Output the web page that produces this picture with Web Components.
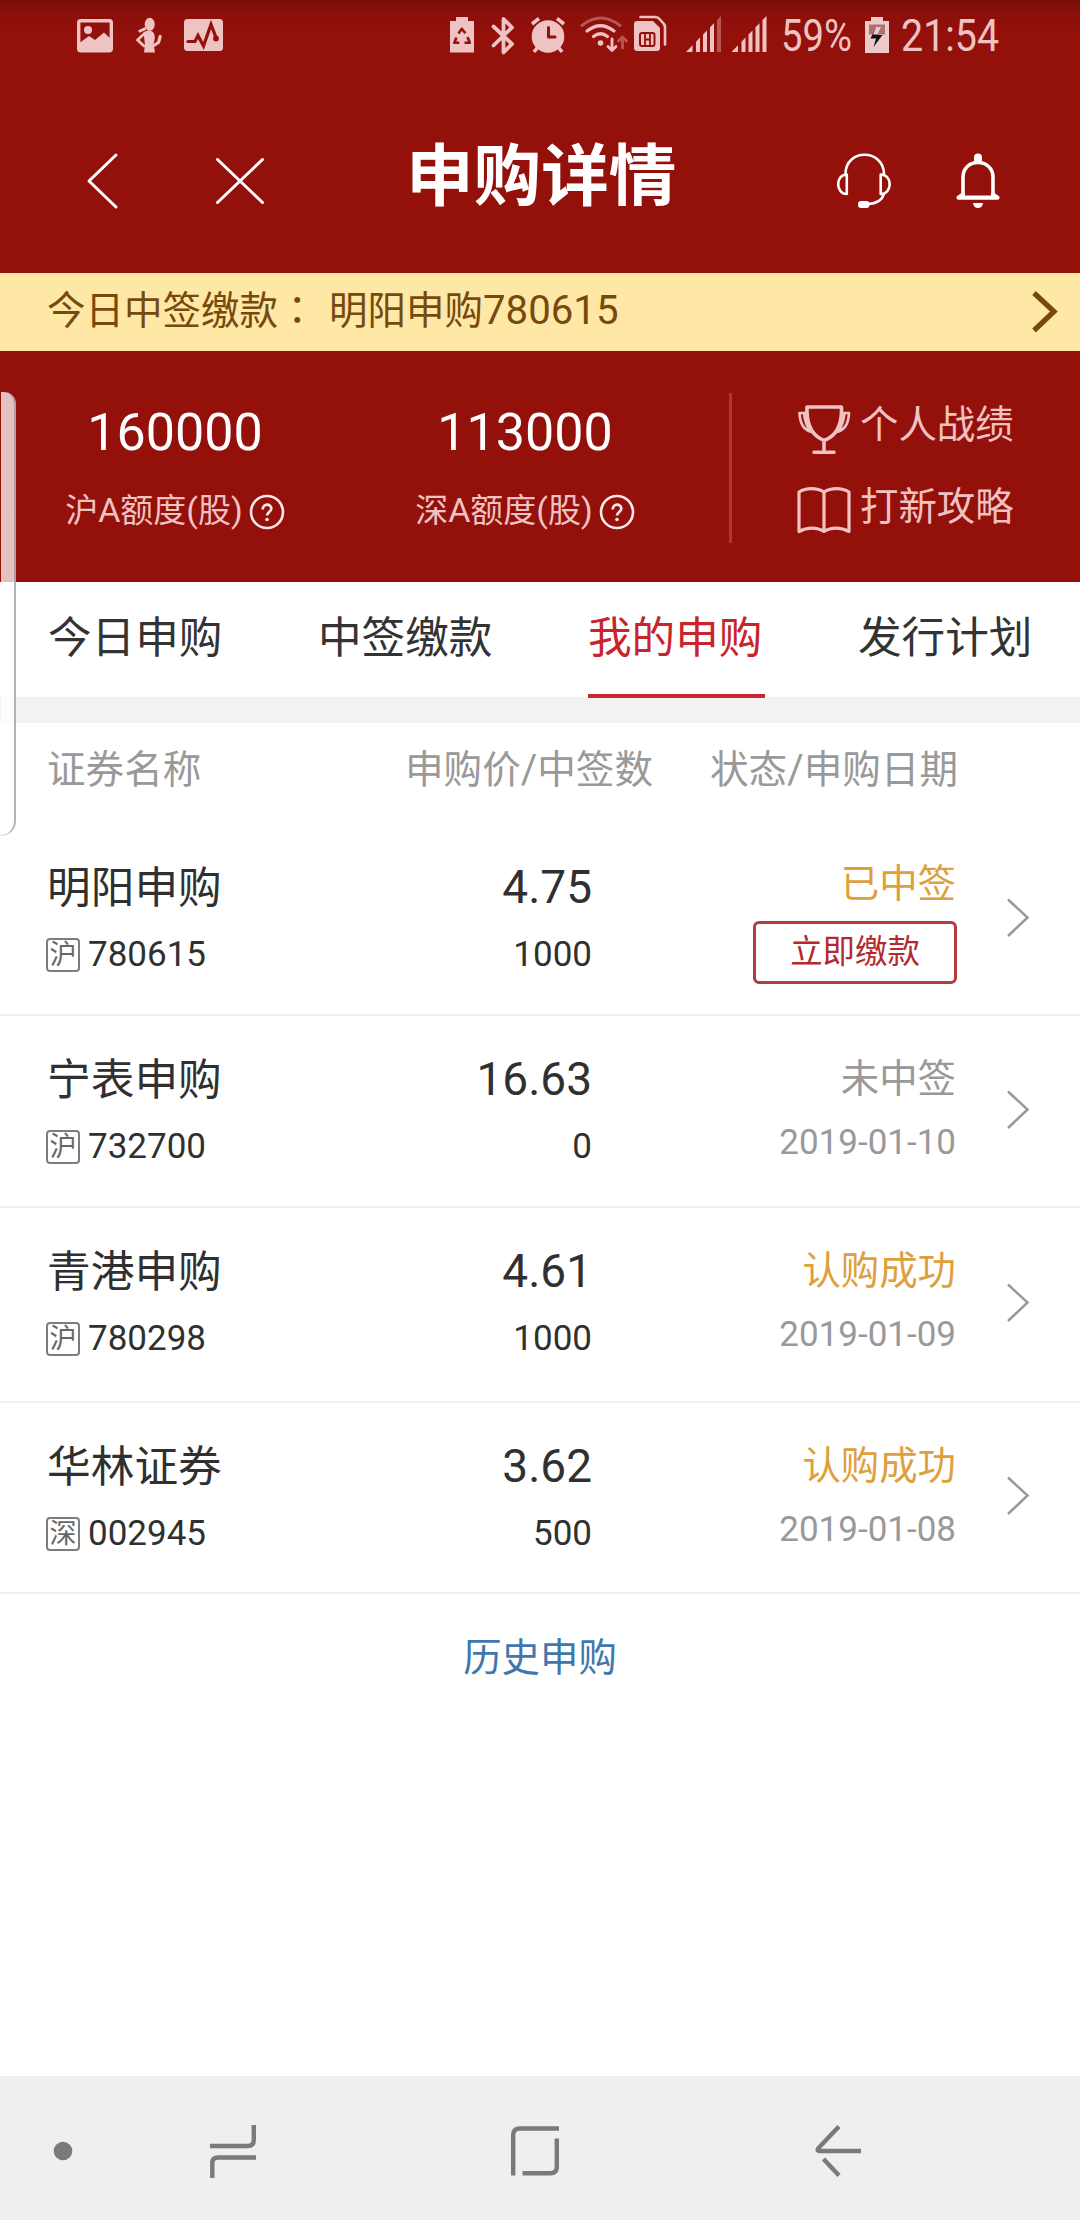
<!DOCTYPE html>
<html lang="zh-CN">
<head>
<meta charset="utf-8">
<title>申购详情</title>
<style>
html,body{margin:0;padding:0;background:#fff}
body{width:1080px;height:2220px;overflow:hidden;font-family:Roboto,"Noto Sans CJK SC",sans-serif}
</style>
</head>
<body>
<ipo-app></ipo-app>
<script>
// Each icon: viewBox and markup, in screen units.
const bars = (x0, faded) => [[0,6.5],[10,14],[17,21],[24,28],[31,35]].map(([a,b],i)=>{
  const t = v => 52 - v*36/35;
  return `<polygon points="${x0+a},52 ${x0+a},${t(a)} ${x0+b},${t(b)} ${x0+b},52" fill="currentColor" stroke="none" ${faded&&i===4?'opacity=".4"':''}/>`;
}).join('');
const BG = '#93100b';
const ICONS = {
  picture:['77 17 36 35',`<rect x="78.7" y="19.7" width="32.6" height="30" rx="2" stroke-width="3.4"/><circle cx="88" cy="29" r="4" fill="currentColor" stroke="none"/><path d="M80 41.500l9-6.500 6 4 9-7.500 8 7.500V50H80z" fill="currentColor" stroke="none"/>`],
  person:['135 17 28 36',`<g fill="currentColor" stroke="none"><ellipse cx="149.700" cy="24.300" rx="5" ry="6.500"/><path d="M138 30.500l7-3.500 1.300 2.700-6.800 3z"/><path d="M143.500 32q6-3 9.500 0 2.500 3 1.500 8l-1 4 1.500 8.500h-11l1-7.500z"/></g><path d="M144.500 33.500l-7 6.500 6.500 6" stroke-width="2.800"/><path d="M153 46l5.500-3.500 1.700-6" stroke-width="3.200"/>`],
  pulse:['184 18 40 34',`<rect x="184" y="19" width="39" height="32" rx="3.500" fill="currentColor" stroke="none"/><path d="M188 41.500h7l3-6 5.500 10.500 7.500-21.500 5 13" stroke="${BG}" stroke-width="3.200" stroke-linejoin="miter"/><circle cx="216" cy="38.500" r="2.900" fill="${BG}" stroke="none"/>`],
  recycle:['450 17 24 36',`<path d="M450 21h6v-4h12v4h6v31.500h-24z" fill="currentColor" stroke="none"/><g stroke="${BG}" stroke-width="2.600" stroke-linecap="butt"><path d="M458.500 33.500l3.300-4.700 3.600 4.500M456.500 37.500l-2.200 5.200h5M467.500 37l2.300 5.700h-5.300"/></g>`],
  bluetooth:['491 15 25 39',`<path d="M493.500 25.500l18.500 17.500-8.500 8.500V18l8.500 8.500L493.500 44.500" stroke-width="3.800"/>`],
  alarm:['530 16 36 38',`<circle cx="548" cy="36.500" r="16.300" fill="currentColor" stroke="none"/><path d="M532 24l7-5.500M564 24l-7-5.500M537 48l-3 4M559 48l3 4" stroke-width="3.600" stroke-linecap="butt"/><path d="M548.500 27.500v9.500h6.500" stroke="${BG}" stroke-width="3"/>`],
  wifi:['579 15 50 38',`<circle cx="600.500" cy="43" r="2.800" fill="currentColor" stroke="none"/><path d="M593.500 36.500q7-5.500 14 0M587 31q13.500-10.500 27 0" stroke-width="3.200"/><path d="M582 25.500q18.500-15 38 0" stroke-width="3" opacity=".4"/><path d="M612 39v11M608 46.500l4 4 4-4" stroke-width="2.800"/><path d="M622.500 48V38M618.500 41l4-4 4 4" stroke-width="2.800" opacity=".4"/>`],
  sim:['633 14 34 38',`<path d="M634 24q0-3 3-3h16l7 7v20q0 3-3 3h-20q-3 0-3-3z" fill="currentColor" stroke="none"/><path d="M640.500 17H655q3 0 4.500 2l4 4.500q1.500 1.500 1.500 3.500v17.500" stroke-width="2.600"/><g stroke="${BG}" stroke-width="2"><rect x="640" y="33" width="14.500" height="13" rx="2"/><path d="M645 34v11M650 34v11M645 39.500h5" stroke-width="1.800"/></g>`],
  signalA:['686 16 35 36',bars(686,true)],
  signalB:['731 16 36 36',bars(731.500,false)],
  charging:['865 17 24 36',`<path d="M865 21h6v-4h12v4h6v32h-24z" fill="#eccaca" stroke="none"/><rect x="869" y="24.500" width="16" height="10" fill="#b07070" stroke="none"/><path d="M875.500 28h5l-2.500 7h4.500l-9 12 2.500-8.500h-5.500z" fill="#151010" stroke="none"/><path d="M876 27h5l-3 7.500h-5z" fill="#eccaca" stroke="none"/>`],
  back:['86 152 34 58',`<path d="M116 155l-27 26 27 26" stroke-width="3"/>`],
  close:['214 156 52 50',`<path d="M217.500 159.500l45 43M262.500 159.500l-45 43" stroke-width="3"/>`],
  headset:['836 153 56 56',`<path d="M845.500 173.500C846 148.500 883 148.500 884 173.500M846.800 174.500v19.500c-11.500 0-11.500-19.500 0-19.500zM880.700 174.500v19.500c12 0 12-19.500 0-19.500zM883.500 195q-2.500 8-15 9" stroke-width="2.600"/><rect x="858" y="201" width="11.500" height="7" rx="3.200" fill="currentColor" stroke="none"/>`],
  bell:['955 153 47 56',`<path d="M963 196v-18.500c0-20 30-20 30 0V196" stroke-width="3.600"/><path d="M958.500 197.700h39M963 194.500l-4 3M993 194.500l4 3" stroke-width="4.200"/><path d="M974 161v-3.500a4 4 0 0 1 8 0v3.500zM973 203h10q-.5 5-5 5t-5-5z" fill="currentColor" stroke="none"/>`],
  notice:['1030 290 28 44',`<path d="M1034 293l20 18.500-20 19" stroke-width="5.200" stroke-linecap="butt" stroke-linejoin="miter"/>`],
  help:['249 493 36 36',`<circle cx="267" cy="511" r="16" stroke-width="2.600"/><path d="M262.700 508.500c0-6.500 8.800-6 8.600-.8-.1 3-4.300 3.500-4.300 6.800" stroke-width="2.700" stroke-linecap="butt"/><circle cx="267" cy="518.500" r="1.800" fill="currentColor" stroke="none"/>`],
  trophy:['796 402 56 53',`<path d="M807 406h34.500q1 24-14 32-3.300 2-6.500 0-15-8-14-32zM824 440v10M814 451.200h20" stroke-width="3.600"/><path d="M806.500 412H799.500c.5 11 4.500 17.500 12.500 19M804 412.500q1.500 11 6 17M842 412h7c-.5 11-4.500 17.500-12.500 19M844.500 412.500q-1.500 11-6 17" stroke-width="2.700"/>`],
  book:['796 487 56 49',`<path d="M799 493c7-4.500 18-4.500 25 0 7-4.500 18-4.500 25 0v39.500c-8-4.500-18-4.500-25 0-7-4.500-17-4.500-25 0zM824 493v39" stroke-width="3.200"/>`],
  next:['1006 896 24 40',`<path d="M1008 898.500l19.500 18-19.500 18.500" stroke-width="2.500" stroke-linecap="butt" stroke-linejoin="miter"/>`],
  dot:['53 2141 20 20',`<circle cx="63" cy="2151" r="9.300" fill="currentColor" stroke="none"/>`],
  recents:['209 2123 49 55',`<path d="M253.800 2124v15q0 6-6 6H210M212.300 2177v-15q0-5.500 6-5.500H256" stroke-width="4.400" stroke-linecap="butt"/>`],
  home:['510 2125 50 52',`<path d="M513.200 2175.500v-40.500q0-6.500 6.500-6.500H559M556.800 2138.500v28.500q0 6.300-6.500 6.300H522.500" stroke-width="4.400" stroke-linecap="butt"/>`],
  navback:['814 2124 48 54',`<path d="M839 2126.500l-20.500 21.500q-2.500 3 1.500 3h41M823.500 2159l15.500 16.500" stroke-width="4.400" stroke-linecap="butt"/>`]
};
function define(tag, css, html){
  customElements.define(tag, class extends HTMLElement{
    connectedCallback(){
      if(this.shadowRoot) return;
      this.attachShadow({mode:'open'}).innerHTML =
        `<style>*{box-sizing:border-box}:host{display:block}${css}</style>${typeof html==='function'?html(this):html}`;
    }
  });
}
define('ui-icon', ':host{display:block;flex:none}svg{display:block;fill:none;stroke:currentColor;stroke-linecap:round;stroke-linejoin:round}', el=>{
  const [vb,body]=ICONS[el.getAttribute('name')]; const [,,w,h]=vb.split(' ');
  return `<svg width="${w}" height="${h}" viewBox="${vb}">${body}</svg>`;
});
define('status-bar', `
  :host{height:70px;color:#efc3c3;background:linear-gradient(#780d09,#8a0f0a 12px,#93100b 32px)}
  .bar{display:flex;align-items:center;height:70px;padding-left:77px}
  .txt{font-size:45px;line-height:50px;margin-top:2px;white-space:nowrap;transform-origin:0 50%;flex:none}
  .pct{width:72px;margin-left:14px;transform:scaleX(.85)}
  .clk{width:100px;margin-left:12px;transform:scaleX(.875)}`,
  `<div class="bar">
    <ui-icon name="picture"></ui-icon><ui-icon name="person" style="margin-left:22px"></ui-icon><ui-icon name="pulse" style="margin-left:21px"></ui-icon>
    <ui-icon name="recycle" style="margin-left:226px"></ui-icon><ui-icon name="bluetooth" style="margin-left:17px"></ui-icon>
    <ui-icon name="alarm" style="margin-left:14px"></ui-icon><ui-icon name="wifi" style="margin-left:13px;margin-top:-2px"></ui-icon>
    <ui-icon name="sim" style="margin-left:4px;margin-top:-4px"></ui-icon><ui-icon name="signalA" style="margin-left:19px;margin-top:-2px"></ui-icon>
    <ui-icon name="signalB" style="margin-left:10px;margin-top:-2px"></ui-icon>
    <div class="txt pct">59%</div><ui-icon name="charging" style="margin-left:12px"></ui-icon><div class="txt clk">21:54</div>
  </div>`);
define('nav-header', `
  :host{height:203px;background:#93100b;color:#fff}
  .bar{display:flex;align-items:center;height:203px;padding:19px 78px 0 86px}
  h1{margin:-8px 0 0 140px;width:270px;font:bold 67.6px/80px Roboto,"Noto Sans CJK SC",sans-serif;white-space:nowrap}`,
  `<div class="bar"><ui-icon name="back"></ui-icon><ui-icon name="close" style="margin-left:94px"></ui-icon>
   <h1>申购详情</h1><ui-icon name="headset" style="margin-left:160px"></ui-icon><ui-icon name="bell" style="margin-left:63px"></ui-icon></div>`);
define('notice-bar', `
  :host{height:78px;background:#ffe7a6;color:#764a0c}
  .bar{display:flex;align-items:center;justify-content:space-between;height:78px;padding:0 22px 0 47px}
  .t{font-size:38.5px;line-height:60px;margin-top:-2px;white-space:nowrap}
  .c{display:inline-block;width:51px;font-family:"Noto Sans CJK JP",sans-serif;line-height:1}
  .n{font-size:40.2px;line-height:1}`,
  `<div class="bar"><div class="t">今日中签缴款<span class="c">：</span>明阳申购<span class="n">780615</span></div><ui-icon name="notice"></ui-icon></div>`);
define('quota-cell', `
  :host{width:350px;text-align:center}
  .v{font-size:52px;line-height:60px;color:#fff}
  .l{display:flex;justify-content:center;align-items:center;gap:6px;margin-top:27px;height:44px;font-size:33px;color:#f0c2c2}
  .n{font-size:34px;line-height:1}.l div{line-height:44px;margin-top:-1px}ui-icon{color:#fbe8e6}`,
  el=>`<div class="v">${el.getAttribute('value')}</div>
  <div class="l"><div>${el.getAttribute('market')}<span class="n">A</span>额度<span class="n">(</span>股<span class="n">)</span></div><ui-icon name="help"></ui-icon></div>`);
define('quota-link', `
  .l{display:flex;align-items:center;height:60px;gap:8px;color:#f0c2c2;font-size:38.4px;line-height:60px}
  span{margin-top:-8px;white-space:nowrap}`,
  el=>`<div class="l"><ui-icon name="${el.getAttribute('icon')}"></ui-icon><span><slot></slot></span></div>`);
define('quota-panel', `
  :host{height:231px;background:#93100b}
  .row{display:flex;align-items:flex-start;height:231px}
  quota-cell{margin-top:51.5px}
  .sep{width:3px;height:150px;margin:42px 0 0 29px;background:#b03533}
  .links{margin:48px 0 0 64px}
  .links quota-link+quota-link{margin-top:21.5px}`,
  `<div class="row"><quota-cell value="160000" market="沪"></quota-cell><quota-cell value="113000" market="深"></quota-cell>
   <div class="sep"></div><div class="links"><quota-link icon="trophy">个人战绩</quota-link><quota-link icon="book">打新攻略</quota-link></div></div>`);
define('tab-item', `
  :host{width:270px;padding-left:48px;color:#333}
  :host([active]){color:#c9232b}
  .t{width:177px;height:115px;font-size:43.6px;line-height:114px;white-space:nowrap}
  :host([active]) .t{height:116px;border-bottom:4px solid #cb262e}`, `<div class="t"><slot></slot></div>`);
define('tab-strip', `
  :host{height:141px;background:#f2f2f2}
  .r{display:flex;height:115px;background:#fff}`,
  `<div class="r"><tab-item>今日申购</tab-item><tab-item>中签缴款</tab-item><tab-item active>我的申购</tab-item><tab-item>发行计划</tab-item></div>`);
define('list-head', `
  :host{height:101px;color:#999}
  .r{display:grid;grid-template-columns:358px 305px 1fr;padding-left:47px;font-size:38.6px;line-height:94px;white-space:nowrap}
  .n{font-size:40px;line-height:1}`,
  `<div class="r"><div>证券名称</div><div>申购价<span class="n">/</span>中签数</div><div>状态<span class="n">/</span>申购日期</div></div>`);
define('ipo-row', `
  .r{display:grid;grid-template-columns:245px 300px 364px 1fr;height:var(--h,192px);padding-left:47px;border-bottom:2px solid #f1f1f1;color:#303030;white-space:nowrap}
  .c{padding-top:33px}
  .name{font-size:43.7px;line-height:62px;height:60px}
  .code{display:flex;align-items:center;gap:8px;height:40px;margin:18px 0 0 -1px;font-size:35px;line-height:40px}
  .mk{width:34px;height:34px;border:2px solid #7d7d7d;border-radius:4px;font-size:27px;line-height:31px;text-align:center;color:#666;display:flex;justify-content:center}
  .num{text-align:right}
  .price{font-size:46px;line-height:60px}
  .qty{font-size:35px;line-height:40px;margin-top:18px}
  .st{text-align:right;color:#999}
  .s{font-size:38.4px;line-height:60px}
  .gold{color:#dea03c}
  .d{font-size:35px;line-height:40px;margin-top:14px}
  .st.act{padding-top:30px}
  .btn{width:204px;height:63px;margin:7px -1px 0 auto;border:3px solid #b53a3c;border-radius:6px;color:#b4292e;font-size:32.4px;line-height:56px;text-align:center}
  .go{display:flex;align-items:center;padding:0 0 5px 50px;color:#999}`,
  el=>{const a=n=>el.getAttribute(n);return `<div class="r">
   <div class="c"><div class="name">${a('name')}</div><div class="code"><span class="mk">${a('market')}</span><span>${a('code')}</span></div></div>
   <div class="c num"><div class="price">${a('price')}</div><div class="qty">${a('qty')}</div></div>
   <div class="c st ${a('action')?'act':''}"><div class="s ${el.hasAttribute('won')?'gold':''}">${a('status')}</div>${a('action')?`<div class="btn">${a('action')}</div>`:`<div class="d">${a('date')}</div>`}</div>
   <div class="go"><ui-icon name="next"></ui-icon></div></div>`});
define('system-nav', `
  :host{height:144px;background:#efefef;color:#7a7a7a}
  .r{display:flex;align-items:center;height:144px;padding:6px 0 0 53px}`,
  `<div class="r"><ui-icon name="dot"></ui-icon><ui-icon name="recents" style="margin-left:136px"></ui-icon><ui-icon name="home" style="margin-left:252px"></ui-icon><ui-icon name="navback" style="margin-left:254px"></ui-icon></div>`);
define('edge-handle', `
  :host{position:absolute;left:1px;top:392px;width:15px;height:444px;background:rgba(255,255,255,.74);border-right:2px solid rgba(150,150,150,.72);border-bottom:1px solid rgba(150,150,150,.5);border-radius:0 15px 19px 0;box-sizing:border-box}`, '');
define('ipo-app', `
  :host{display:flex;flex-direction:column;height:2220px;background:#fff;position:relative}
  .more{flex:1;text-align:center;padding-top:34px;font-size:38.4px;line-height:60px;color:#4077ac}`,
  `<status-bar></status-bar><nav-header></nav-header><notice-bar></notice-bar><quota-panel></quota-panel><tab-strip></tab-strip><list-head></list-head>
  <ipo-row name="明阳申购" market="沪" code="780615" price="4.75" qty="1000" status="已中签" won action="立即缴款"></ipo-row>
  <ipo-row name="宁表申购" market="沪" code="732700" price="16.63" qty="0" status="未中签" date="2019-01-10"></ipo-row>
  <ipo-row name="青港申购" market="沪" code="780298" price="4.61" qty="1000" status="认购成功" won date="2019-01-09" style="--h:195px"></ipo-row>
  <ipo-row name="华林证券" market="深" code="002945" price="3.62" qty="500" status="认购成功" won date="2019-01-08" style="--h:191px"></ipo-row>
  <div class="more">历史申购</div>
  <system-nav></system-nav><edge-handle></edge-handle>`);
</script>
</body>
</html>
